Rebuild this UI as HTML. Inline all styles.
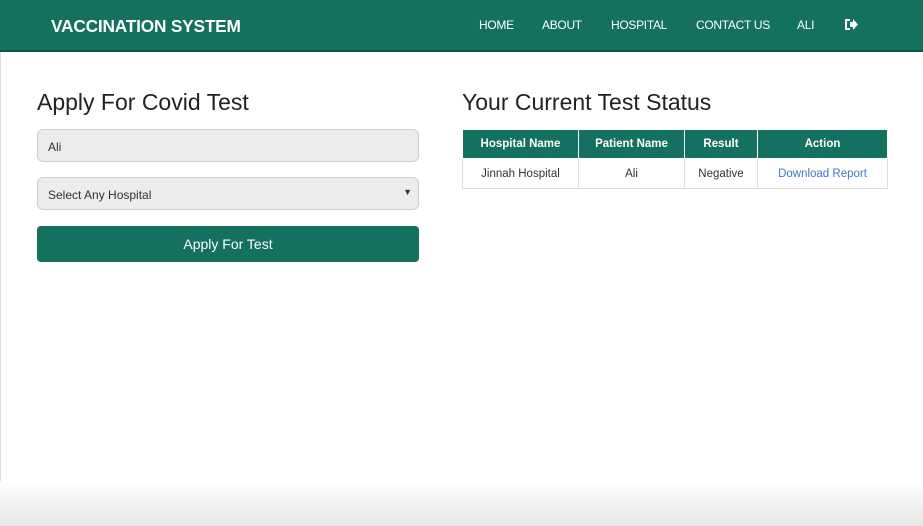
<!DOCTYPE html>
<html><head><meta charset="utf-8"><style>
*{box-sizing:border-box;margin:0;padding:0}
body{width:923px;height:526px;overflow:hidden;background:#fff;font-family:"Liberation Sans",sans-serif;position:relative;box-shadow:inset 1px 0 #ddd}
.nav{height:52px;background:#14705f;border-bottom:2px solid #0f5548;position:relative;color:#fff}
.brand{position:absolute;left:51px;top:16px;font-size:17.3px;font-weight:bold;letter-spacing:-0.2px}
.links a{position:absolute;top:18px;font-size:12px;color:#fff;text-decoration:none;letter-spacing:-0.3px}
h2{position:absolute;font-weight:normal;font-size:23px;color:#222}
.inp{position:absolute;left:37px;width:382px;height:33px;background:#ececec;border:1px solid #cfcfcf;border-radius:6px;font-size:12px;color:#333;padding:10px 10px}
.btn{position:absolute;left:37px;top:226px;width:382px;height:36px;background:#14705f;border-radius:4px;color:#fff;font-size:14px;text-align:center;line-height:36px}
table{position:absolute;left:462px;top:129px;width:426px;border-collapse:collapse;font-size:11.5px}
th{background:#14705f;color:#fff;height:29px;border:1px solid #fff;font-weight:bold}
td{height:30px;border:1px solid #ddd;text-align:center;color:#333}
.fade{position:absolute;left:0;right:0;bottom:0;height:45px;background:linear-gradient(#fff,#e6e6e6)}
</style></head><body>
<div class="nav"><div class="brand">VACCINATION SYSTEM</div>
<div class="links"><a style="left:479px">HOME</a><a style="left:542px">ABOUT</a><a style="left:611px">HOSPITAL</a><a style="left:696px">CONTACT US</a><a style="left:797px">ALI</a>
<svg style="position:absolute;left:844px;top:18px" width="14" height="13" viewBox="0 0 14 13"><path d="M1 1h5v2H3v7h3v2H1z" fill="#fff"/><path d="M6 4h3V1l5 5.5L9 12V9H6z" fill="#fff"/></svg></div></div>
<h2 style="left:37px;top:89px">Apply For Covid Test</h2>
<h2 style="left:462px;top:89px">Your Current Test Status</h2>
<div class="inp" style="top:129px">Ali</div>
<div class="inp" style="top:177px;padding-top:10px">Select Any Hospital<span style="position:absolute;right:6px;top:9px;font-size:9px">&#9660;</span></div>
<div class="btn">Apply For Test</div>
<table><tr><th style="width:116px">Hospital Name</th><th style="width:106px">Patient Name</th><th style="width:73px">Result</th><th>Action</th></tr>
<tr><td>Jinnah Hospital</td><td>Ali</td><td>Negative</td><td style="color:#3d78c8">Download Report</td></tr></table>
<div class="fade"></div>
</body></html>
